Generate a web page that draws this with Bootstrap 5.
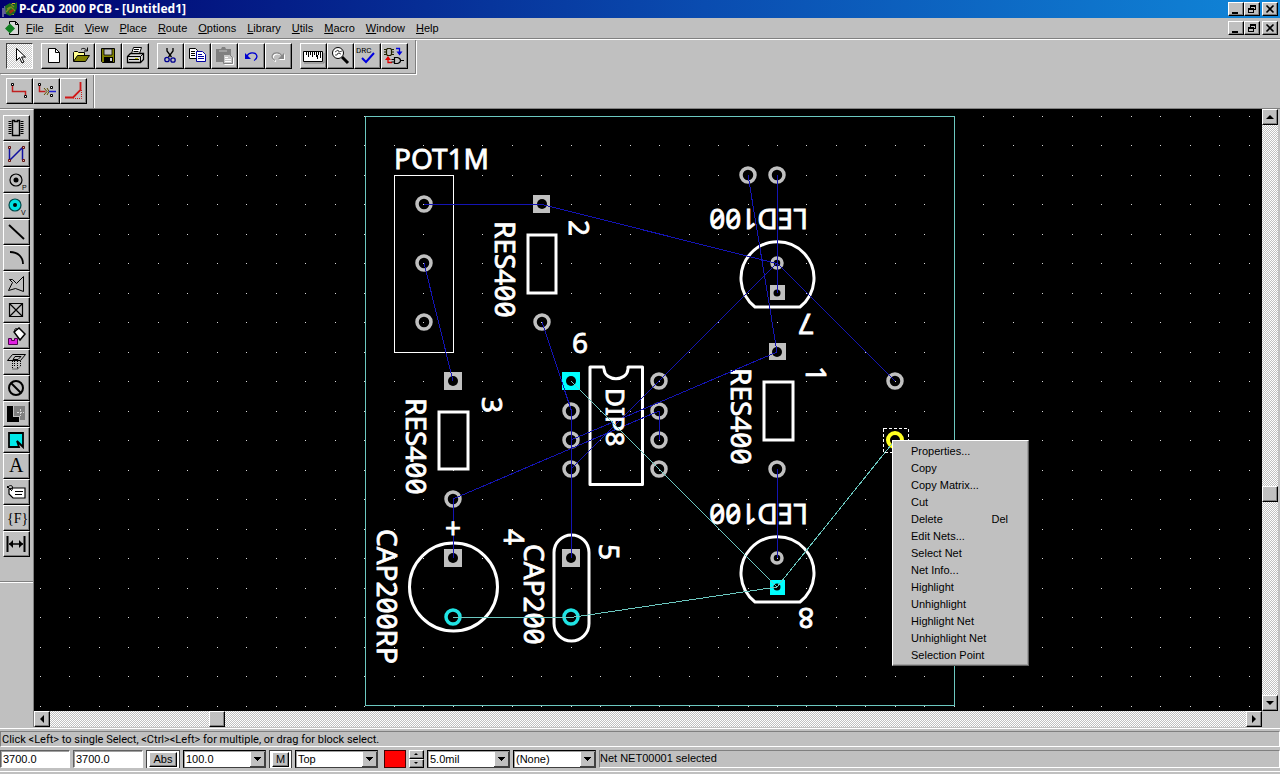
<!DOCTYPE html>
<html lang="en">
<head>
<meta charset="utf-8">
<meta name="viewport" content="width=device-width, initial-scale=1">
<title>P-CAD 2000 PCB - [Untitled1]</title>
<link href="https://cdn.jsdelivr.net/npm/bootstrap@5.3.0/dist/css/bootstrap.min.css" rel="stylesheet">
<style>
:root { --face: #c0c0c0; --shade: #808080; --navy: #1414b4; --teal: #6cc8c0; }
body { font: 11px/14px "Liberation Sans", Arial, sans-serif; color: #000; background: var(--face); }
button { font: inherit; color: #000; }
svg { display: block; }
.titlebar { height: 18px; background: linear-gradient(90deg, #00006e, #0a4cb0 55%, #1086d8); color: #fff; padding: 0 2px; }
.titlebar h1 { font: bold 12px/18px "Noto Sans", sans-serif; margin: 0; }
.menubar { height: 21px; padding: 0 2px 0 5px; border-bottom: 1px solid var(--shade); }
.menubar a { color: #000; text-decoration: none; }
.menus { gap: 11px; margin-left: 6px; }
.raised { background: var(--face); border: 1px solid; border-color: #fff #000 #000 #fff; box-shadow: inset -1px -1px 0 var(--shade); padding: 0; border-radius: 0; }
.winbtn { width: 16px; height: 14px; }
.winbtn.closer { margin-left: 2px; }
.toolbar1 { border-top: 1px solid #fff; }
.strip { padding: 3px 7px 4px 6px; gap: 8px; border-right: 1px solid var(--shade); box-shadow: 1px 0 0 #fff; }
.strip.ruled { border-bottom: 1px solid var(--shade); box-shadow: 1px 1px 0 #fff; margin-bottom: 1px; }
.strip.narrow { padding-right: 6px; }
.toolbar2 { border-bottom: 1px solid var(--shade); }
.tool { width: 27px; height: 26px; flex: none; }
.tool svg { width: 25px; height: 24px; }
.dither { background: repeating-conic-gradient(#fff 0 25%, #c0c0c0 0 50%) 0 0 / 2px 2px; }
.tool.pressed { border-color: #404040 #fff #fff #404040; box-shadow: none; background: repeating-conic-gradient(#fff 0 25%, #c8c8c8 0 50%) 0 0 / 2px 2px; }
.sidebar { width: 34px; border-top: 1px solid #fff; border-right: 1px solid var(--shade); padding: 5px 0 0 3px; }
.sidebar .foot { margin: 24px 0 0 -3px; border-top: 1px solid var(--shade); box-shadow: inset 0 1px 0 #fff; height: 2px; }
.board { background: #000; overflow: hidden; }
.vbar { width: 16px; margin-right: 2px; }
.hbar { height: 16px; margin-right: 18px; }
.sb { width: 16px; height: 16px; flex: none; }
.sb svg { width: 14px; height: 14px; }
.ctx { left: 858px; top: 331px; width: 137px; background: var(--face); border: 1px solid; border-color: #fff #606060 #606060 #fff; box-shadow: inset -1px -1px 0 #a0a0a0; padding: 2px 0 1px; margin: 0; }
.ctx button { display: flex; width: 100%; height: 17px; line-height: 17px; padding: 0 20px 0 18px; border: 0; background: none; justify-content: space-between; }
.silk text { font: 28px/28px "Noto Sans", sans-serif; font-feature-settings: "zero" 1; fill: #fff; stroke: #fff; stroke-width: .8px; }
.silk text.chip { font-size: 26px; }
.shape { fill: none; stroke: #fff; stroke-width: 3; }
.ring { fill: none; stroke: #c0c0c0; stroke-width: 3.5; }
.pad { fill: #c0c0c0; }
.hot.ring { stroke: #20e4e4; }
.pad.hot { fill: #00ffff; }
.hole { fill: #000; }
.nets path { fill: none; stroke: var(--navy); shape-rendering: crispEdges; }
.nets .hotnet { stroke: var(--teal); }
.statusframe { border-top: 1px solid #fff; margin-top: 1px; padding-top: 2px; }
.sunk { border: 1px solid; border-color: var(--shade) #fff #fff var(--shade); }
.hint { height: 16px; padding-left: 1px; line-height: 15px; font-family: Roboto, sans-serif; }
.fields { padding: 3px 0; border-bottom: 1px solid #fff; margin-bottom: 2px; gap: 3px; }
.fields input, .fields select { height: 18px; width: 70px; padding: 0 2px; background: #fff; color: #000; font: inherit; border-radius: 0; appearance: none; flex: none; border: 1px solid; border-color: #606060 #fff #fff #606060; box-shadow: inset 1px 1px 0 #a0a0a0; }
.fields select { width: 83px; border-color: #000 #404040 #404040 #000; background: #fff url("data:image/svg+xml,%3Csvg xmlns='http://www.w3.org/2000/svg' width='15' height='16' shape-rendering='crispEdges'%3E%3Cpath fill='%23c0c0c0' d='M0 0h15v16H0z'/%3E%3Cpath fill='none' stroke='%23fff' d='M.5 15V.5H14'/%3E%3Cpath fill='none' stroke='%23404040' d='M14.5 0v15.5H0'/%3E%3Cpath d='M4 6h7v1H4zM5 7h5v1H5zM6 8h3v1H6zM7 9h1v1H7z'/%3E%3C/svg%3E") no-repeat right 0 top 0; }
.slot { height: 18px; background: #fff; border: 1px solid #404040; border-width: 1px 1px 0 1px; padding: 1px 2px; flex: none; }
.slot button { width: 28px; height: 15px; line-height: 13px; padding: 0; }
.slot button.short { width: 17px; }
.swatch { width: 22px; height: 18px; margin-left: 3px; background: #f00; border: 1px solid #400000; padding: 0; flex: none; }
.spin button { width: 15px; height: 9px; display: block; }
.spin svg { width: 13px; height: 7px; }
</style>
</head>
<body class="vh-100 d-flex flex-column overflow-hidden">

<header>
  <div class="titlebar d-flex align-items-center">
    <svg width="17" height="17" viewBox="0 0 17 17"><path d="M1 7v9M3 5v8" stroke="#c0c0c0"/><path d="M3 5l5-3 3 2 4-3v6l-2 5-5 3-4-2z" fill="#1c6a1c"/><path d="M5 8l3-2M9 3l3 3M4 11l5-5 4 4" stroke="#7a8a20" stroke-width="1.4" fill="none"/><path d="M7 10l4-2 1 2-4 3z" fill="#a03010"/><path d="M10 2h3v1h-3zM9 14h3v-1z" fill="#c8b820"/></svg>
    <h1 class="flex-grow-1">P-CAD 2000 PCB - [Untitled1]</h1>
    <button class="raised winbtn" aria-label="Minimize"><svg width="14" height="12"><path d="M3 9h6v2H3z"/></svg></button>
    <button class="raised winbtn" aria-label="Restore"><svg width="14" height="12" shape-rendering="crispEdges"><path d="M5 2h6v5H9v3H3V5h2zM6 4v1h3v1h1V4zM4 7v2h4V7z" fill-rule="evenodd"/></svg></button>
    <button class="raised winbtn closer" aria-label="Close"><svg width="14" height="12"><path d="M3.500 2.500l7 7M10.500 2.500l-7 7" stroke="#000" stroke-width="1.600"/></svg></button>
  </div>
  <nav class="menubar d-flex align-items-center" aria-label="Main">
    <svg width="15" height="15" viewBox="0 0 15 15"><path d="M4.500 3V.500h6l3 3v10h-9V12" fill="#d8d8d8" stroke="#000"/><path d="M10.500 .500v3h3" fill="none" stroke="#000"/><path d="M0 7.500l5-5 5 5-5 5z" fill="#108020"/></svg>
    <div class="menus d-flex flex-grow-1">
      <a href="#"><u>F</u>ile</a><a href="#"><u>E</u>dit</a><a href="#"><u>V</u>iew</a><a href="#"><u>P</u>lace</a><a href="#"><u>R</u>oute</a><a href="#"><u>O</u>ptions</a><a href="#"><u>L</u>ibrary</a><a href="#"><u>U</u>tils</a><a href="#"><u>M</u>acro</a><a href="#"><u>W</u>indow</a><a href="#"><u>H</u>elp</a>
    </div>
    <button class="raised winbtn" aria-label="Minimize document"><svg width="14" height="12"><path d="M3 9h6v2H3z"/></svg></button>
    <button class="raised winbtn" aria-label="Restore document"><svg width="14" height="12" shape-rendering="crispEdges"><path d="M5 2h6v5H9v3H3V5h2zM6 4v1h3v1h1V4zM4 7v2h4V7z" fill-rule="evenodd"/></svg></button>
    <button class="raised winbtn closer" aria-label="Close document"><svg width="14" height="12"><path d="M3.500 2.500l7 7M10.500 2.500l-7 7" stroke="#000" stroke-width="1.600"/></svg></button>
  </nav>

  <div class="toolbar1 d-flex">
    <div class="strip ruled d-flex">
      <button class="raised tool pressed" aria-label="Select"><svg><path d="M9.500 4.500v12l3-3 2.500 5.500 2-1-2.500-5h4z" fill="#fff" stroke="#000"/></svg></button>
      <div class="d-flex">
        <button class="raised tool" aria-label="New"><svg><path d="M6.500 4.500h7l4 4v10h-11z" fill="#fff" stroke="#000"/><path d="M13.500 4.500v4h4" fill="none" stroke="#000"/></svg></button>
        <button class="raised tool" aria-label="Open"><svg><path d="M4.500 17V8.500l1-1h3l1 1h6V11" fill="#ffff90" stroke="#000"/><path d="M4.500 17.500l4-6h12l-4 6z" fill="#808000" stroke="#000"/><path d="M12 5.500c2-2 4-1 6 1M18.500 3.500v3.500H15" fill="none" stroke="#000"/></svg></button>
        <button class="raised tool" aria-label="Save"><svg><path d="M5.500 4.500h13v14h-12l-1-1z" fill="#808000" stroke="#000"/><path d="M8 5h8v6H8z" fill="#c0c0c0" stroke="#000" stroke-width=".8"/><path d="M8 13h9v5H8z"/><path d="M14 14h2v3h-2z" fill="#d0d0d0"/></svg></button>
        <button class="raised tool" aria-label="Print"><svg><path d="M8.500 9.500l2-6h8l-2 6" fill="#fff" stroke="#000"/><path d="M11 5.500h5M10.500 7.500h5" stroke="#000"/><path d="M4.500 12.500l3-3h13v6l-3 3h-13z" fill="#d8d8d8" stroke="#000" stroke-width="1.300"/><path d="M4.500 12.500h13v6M17.500 12.500l3-3M6 15.500h10" fill="none" stroke="#000"/><path d="M12 14h3v1h-3z" fill="#c0c000"/></svg></button>
      </div>
      <div class="d-flex">
        <button class="raised tool" aria-label="Cut"><svg fill="none"><path d="M9 4v3l4.500 6M15 4v3l-4.500 6" stroke="#000" stroke-width="1.300"/><circle cx="9" cy="15.500" r="2.200" stroke="#000090" stroke-width="1.300"/><circle cx="15" cy="16" r="2.200" stroke="#000090" stroke-width="1.300"/></svg></button>
        <button class="raised tool" aria-label="Copy"><svg fill="#fff"><path d="M4.500 4.500h6l2 2v8h-8z" stroke="#000"/><path d="M6 7.500h4M6 9.500h4M6 11.500h4" stroke="#000"/><path d="M11.500 7.500h6l3 3v7h-9z" stroke="#0000a0"/><path d="M13 10.500h4M13 12.500h6M13 14.500h6" stroke="#0000a0"/></svg></button>
        <button class="raised tool" aria-label="Paste"><svg><path d="M4 5h5l1-2h3l1 2h5v6h-6v7H4z" fill="#808080"/><path d="M7 7h8" stroke="#c0c0c0"/><path d="M11.500 10.500h6l3 3v6h-9z" fill="#c8c8c8" stroke="#808080"/><path d="M12.500 20.500h9v-7M13 13.500h3M13 15.500h6M13 17.500h6" stroke="#fff" fill="none"/></svg></button>
        <button class="raised tool" aria-label="Undo"><svg><path d="M8 12c2-4 8-4 9.500-1 1 2 0 4-2.500 5.500" fill="none" stroke="#0000d0" stroke-width="1.300"/><path d="M6 9v6h6z" fill="#0000d0"/></svg></button>
        <button class="raised tool" aria-label="Redo"><svg><path d="M17 13c-2-4-8-4-9.500-1-1 2 0 4 2.500 5.500" fill="none" stroke="#fff" stroke-width="1.500"/><path d="M16 12c-2-4-8-4-9.500-1-1 2 0 4 2.500 5.500" fill="none" stroke="#888" stroke-width="1.200"/><path d="M19 10v6h-6z" fill="#fff"/><path d="M18 9v6h-6z" fill="#888"/></svg></button>
      </div>
      <div class="d-flex">
        <button class="raised tool" aria-label="Measure"><svg><path d="M2.500 7.500h19v10h-19z" fill="#fff" stroke="#000"/><path d="M3 19h20V9" fill="none" stroke="#808080"/><path d="M5.500 8v3M7.500 8v5M9.500 8v3M11.500 8v5M13.500 8v3M15.500 8v5M17.500 8v3M19.500 8v6M16.500 11v4" stroke="#000"/></svg></button>
        <button class="raised tool" aria-label="Zoom"><svg><path d="M14 13l6 6" stroke="#000" stroke-width="3"/><circle cx="10" cy="9" r="5.500" fill="#fff" stroke="#000"/><path d="M7 8l3-2 1 2 3-1M7 11h2l1-2 3 1" stroke="#000" stroke-width=".7" fill="none"/></svg></button>
        <button class="raised tool" aria-label="DRC"><svg><text x="1" y="9" font-size="8" font-family="Roboto, sans-serif">DRC</text><path d="M7 14l4 4 8-9" fill="none" stroke="#0000e0" stroke-width="2"/></svg></button>
        <button class="raised tool" aria-label="Swap"><svg><path d="M4.500 5.500l1-1h3l1 1v5l-1 1h-3l-1-1zM2 5.500h2M2 8h2M2 10.500h2M10 5.500h2M10 8h2M10 10.500h2" fill="none" stroke="#202000" stroke-width="1.200"/><path d="M14 4.500h3.500V8" fill="none" stroke="#0000e0" stroke-width="1.300"/><path d="M14.500 7.500h6l-3 4z" fill="#0000e0"/><path d="M6 15v3.500h4" fill="none" stroke="#e00000" stroke-width="1.300"/><path d="M3 16l3-4 3 4z" fill="#e00000"/><path d="M12.500 13.500h3c4 1 4 5 0 6h-3zM9.500 15.500h3M9.500 18h3M18.500 16.500H22" fill="none" stroke="#000" stroke-width="1.200"/></svg></button>
      </div>
    </div>
  </div>

  <div class="toolbar2 d-flex">
    <div class="strip narrow d-flex gap-0">
      <button class="raised tool" aria-label="Manual route"><svg><path d="M5.500 6v6.500h13V16" fill="none" stroke="#c02020" stroke-width="1.500"/><path d="M4.500 4.500h2v2h-2zM17.500 16.500h2v2h-2z" fill="#fff" stroke="#000"/></svg></button>
      <button class="raised tool" aria-label="Interactive route"><svg><path d="M5.500 6v6.500h6" fill="none" stroke="#c02020" stroke-width="1.500"/><path d="M4.500 4.500h2v2h-2z" fill="#fff" stroke="#000"/><path d="M10 9l3 3.500-3 3.500M13 9l2 3.500-2 3.500" fill="none" stroke="#605000"/><path d="M15 12.500h7" stroke="#2020d0" stroke-width="1.500"/><path d="M16.500 7.500h2v2h-2zM16.500 15.500h2v2h-2z" fill="#fff" stroke="#000"/></svg></button>
      <button class="raised tool" aria-label="Miter"><svg><path d="M19.500 3v8L12 18.500H4" fill="none" stroke="#d01818" stroke-width="1.800"/><path d="M20.500 11v8.500h-8" fill="none" stroke="#d01818" stroke-dasharray="1 1"/></svg></button>
    </div>
  </div>
</header>

<main class="d-flex flex-grow-1 overflow-hidden">
  <div class="sidebar flex-shrink-0 d-flex flex-column">
    <button class="raised tool" aria-label="Component"><svg><path d="M8.500 4.500h2v1h3v-1h2v15h-7z" fill="none" stroke="#000" stroke-width="1.400"/><path d="M6 5v14M18 5v14" stroke="#000" stroke-width="3" stroke-dasharray="1 1"/></svg></button>
    <button class="raised tool" aria-label="Connection"><svg><path d="M5.500 18V5.500M5.500 18.500l13-13V18" fill="none" stroke="#1010a0" stroke-width="1.500"/><path d="M4.500 4.500h2v2h-2zM18.500 4.500h2v2h-2zM4.500 17.500h2v2h-2zM18.500 17.500h2v2h-2z" fill="#e8c0b0" stroke="#601010"/></svg></button>
    <button class="raised tool" aria-label="Pad"><svg><circle cx="12" cy="12" r="6" fill="none" stroke="#000" stroke-width="1.200"/><circle cx="12" cy="12" r="2.500"/><text x="18" y="22" font-size="7" font-family="Liberation Sans, sans-serif">P</text></svg></button>
    <button class="raised tool" aria-label="Via"><svg><circle cx="11" cy="11" r="6" fill="#00e0e0" stroke="#004848" stroke-width="1.200"/><circle cx="11" cy="11" r="2"/><text x="17" y="21" font-size="7" font-family="Liberation Sans, sans-serif">V</text></svg></button>
    <button class="raised tool" aria-label="Line"><svg><path d="M5 5l15 14" stroke="#000" stroke-width="1.800"/></svg></button>
    <button class="raised tool" aria-label="Arc"><svg><path d="M6 6c8 0 13 5 13 12" fill="none" stroke="#000" stroke-width="1.800"/></svg></button>
    <button class="raised tool" aria-label="Polygon"><svg><path d="M4.500 18.500l4-8-3-3h3l4 4 7-7v15l-8-3z" fill="none" stroke="#000"/></svg></button>
    <button class="raised tool" aria-label="Point"><svg><path d="M5.500 5.500h13v13h-13zl13 13M18.500 5.500l-13 13" fill="none" stroke="#000" stroke-width="1.200"/></svg></button>
    <button class="raised tool" aria-label="Copper pour"><svg><path d="M10 8l5-4 6 6-5 6z" fill="#fff" stroke="#000" stroke-width="1.500"/><path d="M11 8c-1-3 1-5 3-2" fill="none" stroke="#000"/><path d="M4.500 14.500h3v2h3v-2h3v6h-9z" fill="#e020e0" stroke="#500050"/></svg></button>
    <button class="raised tool" aria-label="Cutout"><svg><path d="M8.500 4.500h13l-5 6h-13zM11 6.500h6l-3 3H9z" fill="none" stroke="#000"/><path d="M8.500 11v8h5M10.500 11v6M13.500 11v7M16.500 11v5l-3 3" fill="none" stroke="#000" stroke-dasharray="1 1"/></svg></button>
    <button class="raised tool" aria-label="Keepout"><svg><circle cx="12" cy="12" r="7" fill="none" stroke="#000" stroke-width="2"/><path d="M7 7l10 10" stroke="#000" stroke-width="2"/></svg></button>
    <button class="raised tool" aria-label="Plane"><svg><path d="M3 4h6v11h6v5H3z"/><path d="M10 4h11v14h-5v-4h-6z" fill="#808080"/><path d="M16.500 7v7M13 10.500h7" stroke="#d8d8d8" stroke-dasharray="2 1"/></svg></button>
    <button class="raised tool" aria-label="Room"><svg><path d="M5 5h14v14l-6-6 2 6H5z" fill="#00e8e8" stroke="#000" stroke-width="1.800"/></svg></button>
    <button class="raised tool" aria-label="Text"><svg><text x="5" y="18" font-size="20" font-family="Liberation Serif, serif">A</text></svg></button>
    <button class="raised tool" aria-label="Attribute"><svg><path d="M5 9l4-1h12v10H9l-4-4z" fill="#fff" stroke="#000" stroke-width="1.200"/><path d="M11 11.500h8M11 14.500h7M3 6l5 5M3 8c3-4 7-3 5 2" fill="none" stroke="#000"/></svg></button>
    <button class="raised tool" aria-label="Field"><svg><text x="3" y="17" font-size="14" font-family="Liberation Serif, serif">{F}</text></svg></button>
    <button class="raised tool" aria-label="Dimension"><svg><path d="M3.500 4v16M20.500 4v16" stroke="#000" stroke-width="2"/><path d="M5 12h14" stroke="#000" stroke-width="1.500"/><path d="M5 12l4-4v8zM19 12l-4-4v8z"/></svg></button>
    <div class="foot"></div>
  </div>

  <div class="d-flex flex-column flex-grow-1 overflow-hidden">
    <div class="d-flex flex-grow-1 overflow-hidden">
      <div class="board flex-grow-1 position-relative">
        <svg class="w-100 h-100" role="img" aria-label="PCB layout">
          <g transform="translate(-34 -109)">
            <path id="grid" stroke="#d8d8d8" shape-rendering="crispEdges"/>
            <rect x="365.500" y="116.500" width="589" height="589" fill="none" stroke="#6cc8c0" shape-rendering="crispEdges"/>

            <g class="shape">
              <rect x="394.500" y="175.500" width="59" height="177" stroke-width="1"/>
              <rect x="528" y="235" width="28" height="58"/>
              <rect x="439" y="412" width="29" height="57"/>
              <rect x="764" y="382" width="29" height="58"/>
              <path d="M603.500 367H590v117.500h52.500V367H628v2c-1 13-23 13-24 0z" stroke-linejoin="round"/>
              <circle cx="453.500" cy="587" r="44"/>
              <rect x="554" y="535" width="35" height="106" rx="17.500"/>
              <path id="led" d="M755 307a36.500 36.500 0 1 1 45 0z"/>
              <use href="#led" y="295"/>
            </g>

            <g class="silk">
              <text x="394" y="169">POT1M</text>
              <text transform="translate(495 221) rotate(90)">RES400</text>
              <text transform="translate(406 398) rotate(90)">RES400</text>
              <text transform="translate(731 368) rotate(90)">RES400</text>
              <text transform="translate(377 529) rotate(90)">CAP200RP</text>
              <text transform="translate(524 544) rotate(90)">CAP200</text>
              <text transform="translate(808 209) rotate(180)">LED100</text>
              <text transform="translate(808 504) rotate(180)">LED100</text>
              <text transform="translate(806 366) rotate(90)">1</text>
              <text transform="translate(569 220) rotate(90)">2</text>
              <text transform="translate(482 397) rotate(90)">3</text>
              <text transform="translate(504 529) rotate(90)">4</text>
              <text transform="translate(599 544) rotate(90)">5</text>
              <text x="572" y="353">6</text>
              <text transform="translate(814 314) rotate(180)">7</text>
              <text transform="translate(814 608) rotate(180)">8</text>
            </g>

            <g>
              <circle class="ring" cx="424" cy="204" r="7"/><circle class="ring" cx="424" cy="263" r="7"/><circle class="ring" cx="424" cy="322" r="7"/>
              <circle class="ring" cx="542" cy="322" r="7"/><circle class="ring" cx="453" cy="499" r="7"/>
              <circle class="ring" cx="571" cy="411" r="7"/><circle class="ring" cx="571" cy="440" r="7"/><circle class="ring" cx="571" cy="469" r="7"/>
              <circle class="ring" cx="659" cy="381" r="7"/><circle class="ring" cx="659" cy="411" r="7"/><circle class="ring" cx="659" cy="440" r="7"/><circle class="ring" cx="659" cy="469" r="7"/>
              <circle class="ring" cx="748" cy="175" r="7"/><circle class="ring" cx="777" cy="175" r="7"/>
              <circle class="ring" cx="777" cy="469" r="7"/><circle class="ring" cx="895" cy="381" r="7"/>
              <circle class="ring" cx="777" cy="263" r="5"/><circle class="ring" cx="777" cy="558" r="5"/>
              <circle class="ring hot" cx="453" cy="617" r="7"/><circle class="ring hot" cx="571" cy="617" r="7"/>
              <circle cx="895" cy="440" r="7" fill="none" stroke="#ffff20" stroke-width="4"/>
              <rect class="pad" x="533" y="195" width="17" height="18"/><circle class="hole" cx="542" cy="204" r="5"/>
              <rect class="pad" x="444" y="372" width="18" height="18"/><circle class="hole" cx="453" cy="381" r="5"/>
              <rect class="pad" x="444" y="549" width="18" height="18"/><circle class="hole" cx="453" cy="558" r="5"/>
              <rect class="pad" x="562" y="549" width="18" height="18"/><circle class="hole" cx="571" cy="558" r="5"/>
              <rect class="pad" x="769" y="343" width="17" height="17"/><circle class="hole" cx="777" cy="352" r="5"/>
              <rect class="pad" x="770" y="285" width="15" height="15"/><circle class="hole" cx="777" cy="293" r="3.500"/>
              <rect class="pad hot" x="562" y="372" width="18" height="18"/><circle class="hole" cx="571" cy="381" r="5"/>
              <rect class="pad hot" x="770" y="580" width="15" height="15"/><circle class="hole" cx="777" cy="587" r="3.500"/>
            </g>

            <g class="nets">
              <path d="M424 204.500H542L777 263.500M424 263L453 381M542 322L571.500 411"/>
              <path d="M571.500 411V469M571.500 469V558"/>
              <path d="M777.500 175V293"/>
              <path d="M748 175L777 352"/>
              <path d="M777 263L571 469"/>
              <path d="M777 263L895 381"/>
              <path d="M777 352L571 440M453 499L659 411"/>
              <path d="M659.500 411V440M453.500 499V558M777.500 469V558"/>
            </g>
            <g class="silk">
              <text class="chip" transform="translate(606 388) rotate(90)">DIP8</text>
              <text x="445" y="538">+</text>
            </g>
            <g class="nets">
              <path class="hotnet" d="M571 381L777 587M453 617.500H571L777 587L895 440"/>
            </g>
            <rect x="883.500" y="428.500" width="25" height="24" fill="none" stroke="#fff" stroke-dasharray="3 2" shape-rendering="crispEdges"/>
          </g>
        </svg>

        <div class="ctx position-absolute" role="menu">
          <button role="menuitem">Properties...</button>
          <button role="menuitem">Copy</button>
          <button role="menuitem">Copy Matrix...</button>
          <button role="menuitem">Cut</button>
          <button role="menuitem">Delete<span>Del</span></button>
          <button role="menuitem">Edit Nets...</button>
          <button role="menuitem">Select Net</button>
          <button role="menuitem">Net Info...</button>
          <button role="menuitem">Highlight</button>
          <button role="menuitem">Unhighlight</button>
          <button role="menuitem">Highlight Net</button>
          <button role="menuitem">Unhighlight Net</button>
          <button role="menuitem">Selection Point</button>
        </div>
      </div>
      <div class="vbar dither d-flex flex-column flex-shrink-0">
        <button class="raised sb" aria-label="Scroll up"><svg><path d="M7 5l4 4H3z"/></svg></button>
        <div style="flex: 361 0 0"></div>
        <div class="raised sb"></div>
        <div style="flex: 193 0 0"></div>
        <button class="raised sb" aria-label="Scroll down"><svg><path d="M3 5h8l-4 4z"/></svg></button>
      </div>
    </div>
    <div class="hbar dither d-flex flex-shrink-0">
      <button class="raised sb" aria-label="Scroll left"><svg><path d="M9 3v8L5 7z"/></svg></button>
      <div style="flex: 159 0 0"></div>
      <div class="raised sb"></div>
      <div style="flex: 1021 0 0"></div>
      <button class="raised sb" aria-label="Scroll right"><svg><path d="M5 3v8l4-4z"/></svg></button>
    </div>
  </div>
</main>

<footer>
  <div class="statusframe">
    <div class="sunk hint">Click &lt;Left&gt; to single Select, &lt;Ctrl&gt;&lt;Left&gt; for multiple, or drag for block select.</div>
    <div class="fields d-flex">
      <input value="3700.0" aria-label="X coordinate">
      <input value="3700.0" aria-label="Y coordinate">
      <div class="slot"><button class="raised">Abs</button></div>
      <select aria-label="Grid"><option>100.0</option></select>
      <div class="slot"><button class="raised short">M</button></div>
      <select aria-label="Layer"><option>Top</option></select>
      <button class="swatch" aria-label="Layer colour"></button>
      <div class="spin">
        <button class="raised" aria-label="Next layer"><svg><path d="M6 2l2 2H4z"/></svg></button>
        <button class="raised" aria-label="Previous layer"><svg><path d="M4 2h4L6 4z"/></svg></button>
      </div>
      <select aria-label="Line width"><option>5.0mil</option></select>
      <select aria-label="Radius"><option>(None)</option></select>
      <div class="sunk flex-grow-1">Net NET00001 selected</div>
    </div>
  </div>
</footer>

<script>
// Grid dots: one per 100 mil, snapped to whole pixels.
var d = "", pitch = 29.48;
for (var r = 0; r < 60; r++)
  for (var c = 0; c < 100; c++)
    d += "M" + Math.round(40 + c * pitch) + " " + (Math.round(116 + r * pitch) + 0.5) + "h1";
document.getElementById("grid").setAttribute("d", d);
</script>
<script src="https://cdn.jsdelivr.net/npm/bootstrap@5.3.0/dist/js/bootstrap.bundle.min.js"></script>
</body>
</html>
